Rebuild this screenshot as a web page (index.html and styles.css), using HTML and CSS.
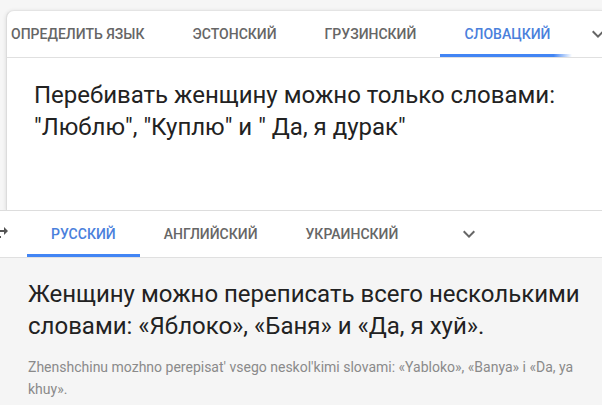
FILE: index.html
```html
<!DOCTYPE html>
<html>
<head>
  <meta charset="utf-8" />
  <title>Переводчик</title>
  <link rel="stylesheet" href="styles.css">
</head>
<body>

<div class="source-card">
  <div class="tabs">
    <div class="tab first">Определить язык</div>
    <div class="tab">Эстонский</div>
    <div class="tab">Грузинский</div>
    <div class="tab active fading">Словацкий</div>
    <span class="more">
      <svg width="24" height="24" viewBox="0 0 24 24"><path d="M16.59 8.59L12 13.17 7.41 8.59 6 10l6 6 6-6z"/></svg>
    </span>
  </div>
  <div class="source-text">Перебивать женщину можно только словами: "Люблю", "Куплю" и " Да, я дурак"</div>
</div>

<div class="target">
  <div class="tabs target-tabs">
    <span class="swap">
      <svg width="24" height="24" viewBox="0 0 24 24"><path d="M6.99 11L3 15l3.99 4v-3H14v-2H6.99v-3zM21 9l-3.99-4v3H10v2h7.01v3L21 9z"/></svg>
    </span>
    <div class="tab active">Русский</div>
    <div class="tab">Английский</div>
    <div class="tab">Украинский</div>
    <span class="more small">
      <svg width="24" height="24" viewBox="0 0 24 24"><path d="M16.59 8.59L12 13.17 7.41 8.59 6 10l6 6 6-6z"/></svg>
    </span>
  </div>
  <div class="result">
    <div class="result-text">Женщину можно переписать всего несколькими словами: «Яблоко», «Баня» и «Да, я хуй».</div>
    <div class="translit">Zhenshchinu mozhno perepisat' vsego neskol'kimi slovami: «Yabloko», «Banya» i «Da, ya khuy».</div>
  </div>
</div>

</body>
</html>
```

FILE: styles.css
```css
body {
  margin: 0;
  background: #f6f6f6;
  font-family: Roboto, "Noto Sans", sans-serif;
  color: #222;
  overflow: hidden;
}

.source-card {
  margin: 10px 0 0 6px;
  height: 199px;
  background: #fff;
  border-left: 1px solid #dcdcdc;
  border-top: 1px solid #e4e4e4;
  border-radius: 8px 0 0 0;
  box-shadow: 0 1px 4px rgba(0, 0, 0, 0.12);
  overflow: hidden;
}

.tabs {
  display: flex;
  align-items: center;
  height: 46px;
  border-bottom: 1px solid #e0e0e0;
  white-space: nowrap;
}

.tab {
  position: relative;
  height: 46px;
  line-height: 46px;
  padding: 0 24px;
  font-size: 14px;
  font-weight: 500;
  text-transform: uppercase;
  color: #666;
}

.tab.first {
  padding-left: 4px;
}

.tab.active {
  color: #4a80dc;
}

.tab.active::after {
  content: "";
  position: absolute;
  left: 0;
  right: 0;
  bottom: 0;
  height: 3px;
  background: #4285f4;
}

.tab.fading::after {
  right: 2px;
  background: linear-gradient(90deg, #4285f4 86%, rgba(66, 133, 244, 0));
}

.more {
  display: flex;
  margin-left: 12px;
  fill: #666;
}

.more.small {
  margin-left: 35px;
}

.source-text {
  width: 540px;
  padding: 21px 0 0 27px;
  font-size: 24px;
  line-height: 32px;
}

.target {
  background: #fff;
  border-top: 1px solid #ddd;
  padding-bottom: 10px;
}

.target-tabs {
  overflow: hidden;
}

.swap {
  display: flex;
  margin: 0 16px 0 -13px;
  fill: #555;
}

.result {
  background: #f5f5f5;
  padding: 20px 18px 5px 28px;
}

.result-text {
  font-size: 24px;
  line-height: 32px;
}

.translit {
  margin-top: 14px;
  font-size: 14px;
  line-height: 22px;
  color: #8a8a8a;
}
```
